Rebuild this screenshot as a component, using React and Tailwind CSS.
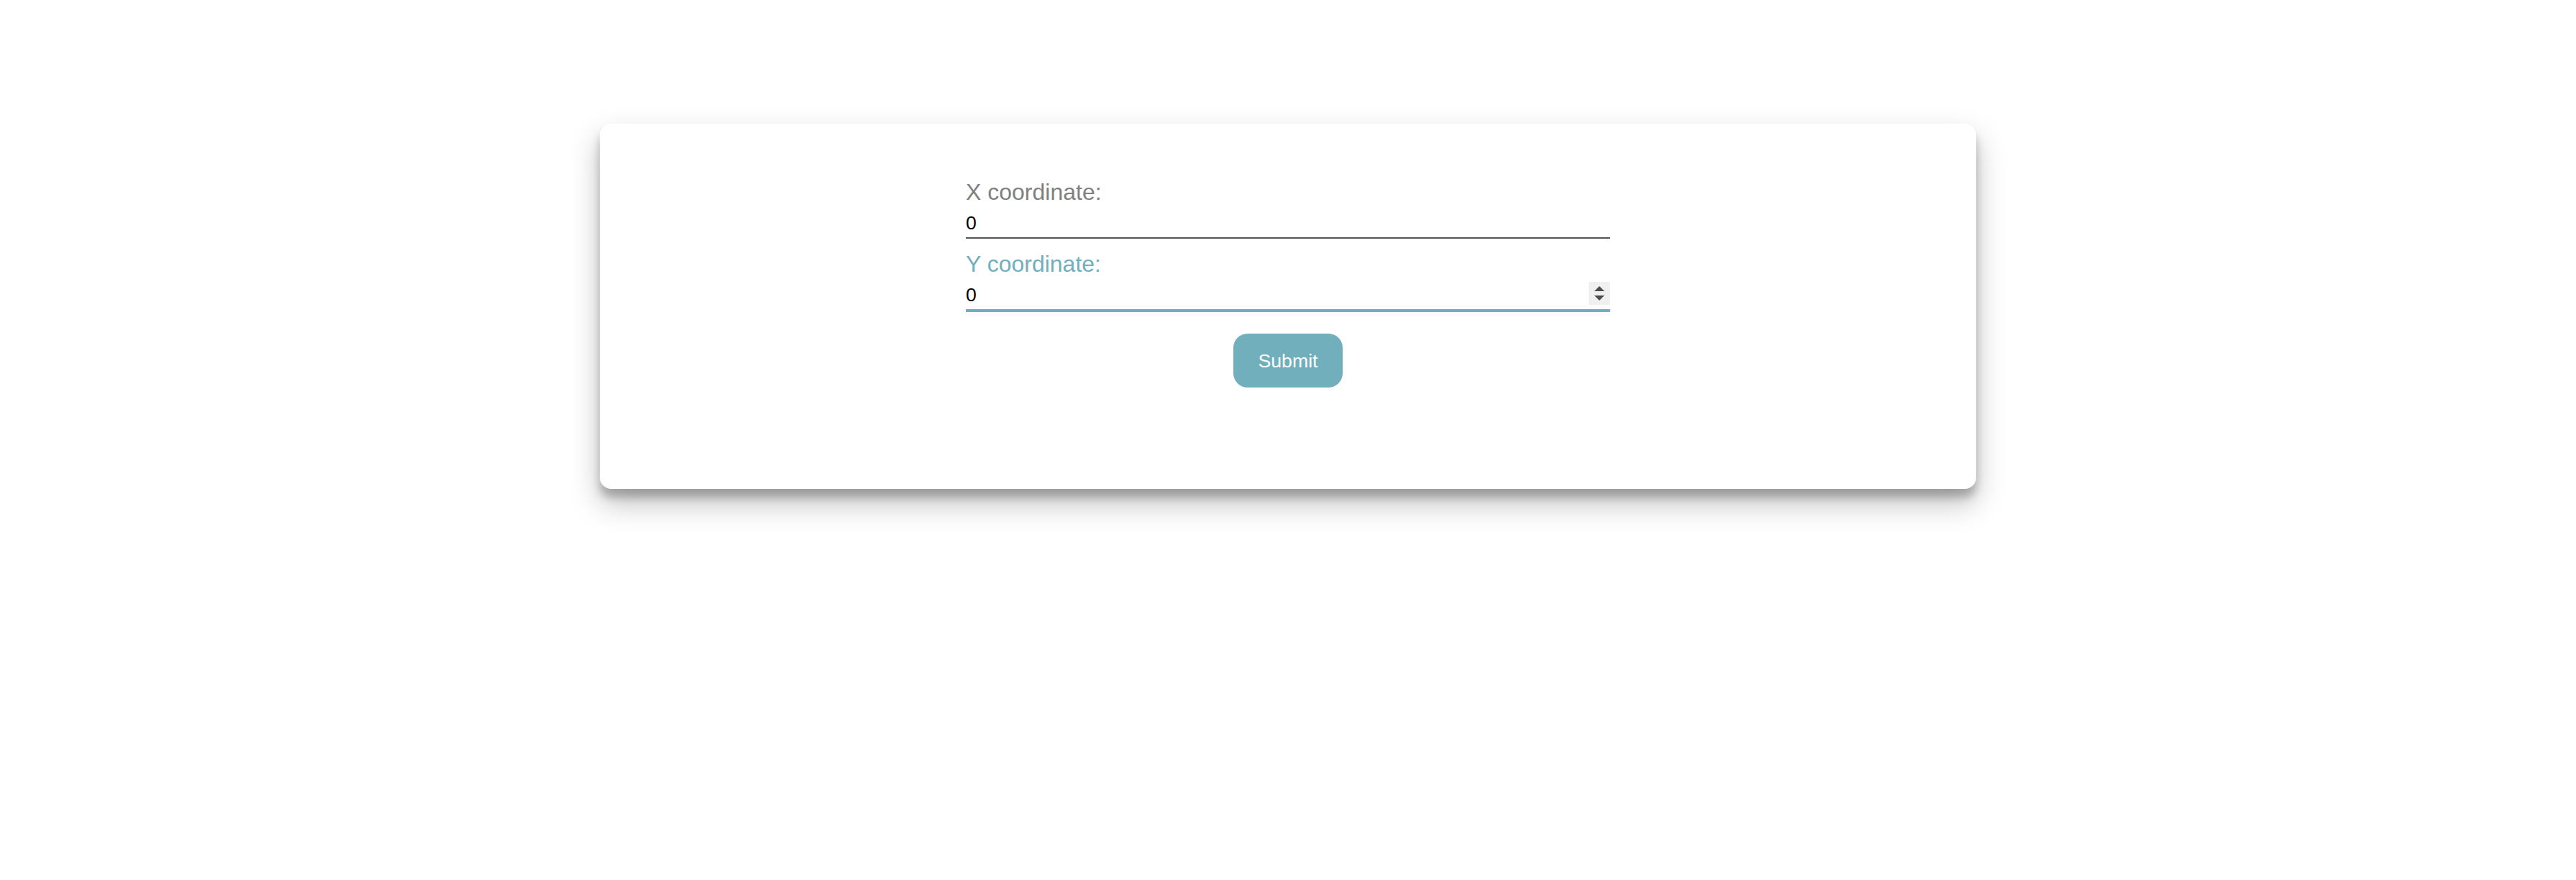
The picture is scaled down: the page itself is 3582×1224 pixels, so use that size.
import React from "react";

export default function App() {
  return (
    <div className="min-h-[1224px] w-full bg-white pt-[172px]" style={{ fontFamily: '"Liberation Sans", Arial, sans-serif' }}>
      <div className="mx-auto w-[1914px] rounded-[16px] bg-white pt-[77px] pb-[141px] shadow-[0_20px_40px_rgba(0,0,0,0.25),0_12px_12px_rgba(0,0,0,0.22)]">
        <form className="mx-auto flex w-[896px] flex-col" onSubmit={(e) => e.preventDefault()}>
          <label className="block h-[37px] text-[32px] leading-[37px] text-[#808080]">X coordinate:</label>
          <input
            type="text"
            defaultValue="0"
            className="mt-[4px] h-[42px] w-full border-0 border-b-2 border-solid border-[#555555] bg-transparent p-0 text-[26.67px] text-black outline-none"
          />
          <label className="mt-[17px] block h-[37px] text-[32px] leading-[37px] text-[#72afbc]">Y coordinate:</label>
          <div className="relative mt-[4px] h-[42px] w-full">
            <input
              type="text"
              defaultValue="0"
              className="h-[42px] w-full border-0 border-b-2 border-solid border-[#72afbc] bg-transparent p-0 text-[26.67px] text-black shadow-[0_2px_0_#72afbc] outline-none"
            />
            <div className="absolute right-0 top-[2px] flex h-[32px] w-[30px] flex-col items-center justify-center gap-[6px] rounded-r-[2px] bg-[#f0f0f0]">
              <svg width="14" height="7" viewBox="0 0 14 7"><polygon points="7,0 14,7 0,7" fill="#4d4d4d" /></svg>
              <svg width="14" height="7" viewBox="0 0 14 7"><polygon points="0,0 14,0 7,7" fill="#4d4d4d" /></svg>
            </div>
          </div>
          <div className="mt-[32px] flex justify-center">
            <button
              type="submit"
              className="h-[75px] w-[152px] rounded-[20px] border-0 bg-[#72afbc] text-[26.67px] text-white"
            >
              Submit
            </button>
          </div>
        </form>
      </div>
    </div>
  );
}
